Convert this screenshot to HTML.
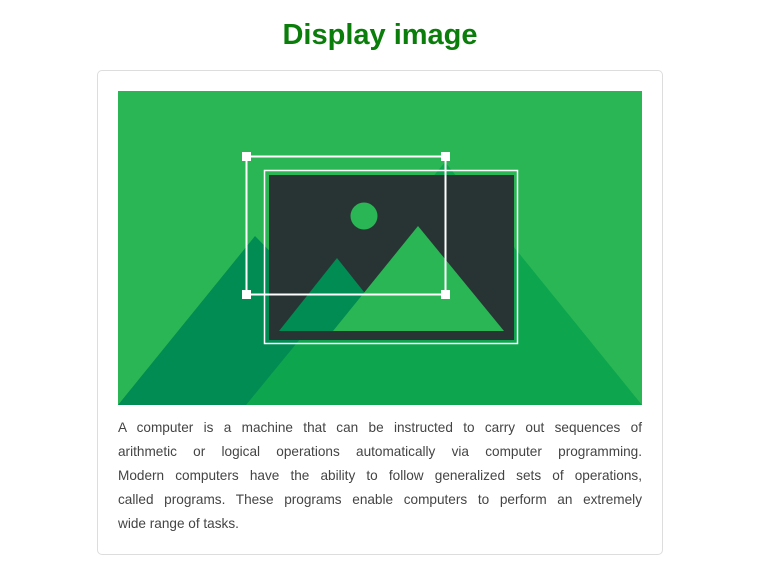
<!DOCTYPE html>
<html><head><meta charset="utf-8"><style>
body{margin:0;background:#fff;width:758px;height:571px;position:relative;font-family:"Liberation Sans",sans-serif;}
h1{position:absolute;top:15px;left:0;width:760px;margin:0;text-align:center;font-size:29px;font-weight:bold;color:#0b7d0b;line-height:40px;}
.card{position:absolute;left:97px;top:70px;width:566px;height:485px;border:1px solid #ddd;border-radius:5px;box-sizing:border-box;}
svg{position:absolute;left:118px;top:91px;}
.t{position:absolute;left:118px;top:416px;width:524px;color:#444;font-size:13.6px;line-height:24px;}
.t div{text-align:justify;text-align-last:justify;white-space:nowrap;height:24px;}
.t div.l{text-align-last:left;}
</style></head><body>
<h1>Display image</h1>
<div class="card"></div>
<svg width="524" height="314" viewBox="118 91 524 314">
<rect x="118" y="91" width="524" height="314" fill="#2bb656"/>
<polygon points="118,405 255,236 420,405" fill="#008c52"/>
<polygon points="246,405 445,162 642,405" fill="#0da64e"/>
<rect x="264.5" y="170.5" width="253" height="173" fill="none" stroke="#fff" stroke-width="1.5"/>
<rect x="269" y="175" width="245" height="165" fill="#283433"/>
<circle cx="364" cy="216" r="13.5" fill="#2bb656"/>
<polygon points="279,331 337,258 395,331" fill="#008c52"/>
<polygon points="333,331 418,226 504,331" fill="#2bb656"/>
<rect x="246.5" y="156.5" width="199" height="138" fill="none" stroke="#fff" stroke-width="2"/>
<rect x="242" y="152" width="9" height="9" fill="#fff"/>
<rect x="441" y="152" width="9" height="9" fill="#fff"/>
<rect x="242" y="290" width="9" height="9" fill="#fff"/>
<rect x="441" y="290" width="9" height="9" fill="#fff"/>
</svg>
<div class="t">
<div>A computer is a machine that can be instructed to carry out sequences of</div>
<div>arithmetic or logical operations automatically via computer programming.</div>
<div>Modern computers have the ability to follow generalized sets of operations,</div>
<div>called programs. These programs enable computers to perform an extremely</div>
<div class="l">wide range of tasks.</div>
</div>
</body></html>
